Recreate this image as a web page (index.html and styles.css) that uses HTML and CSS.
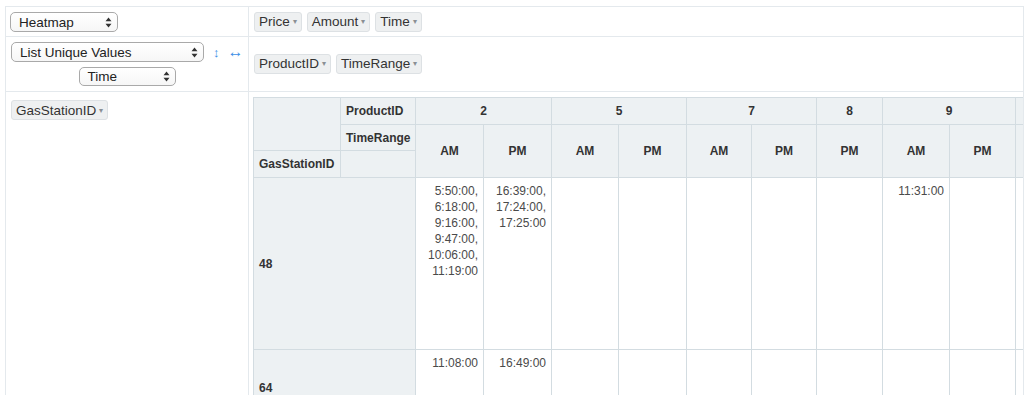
FILE: index.html
```html
<!DOCTYPE html>
<html lang="en">
<head>
  <meta charset="UTF-8">
  <title>Pivot Table</title>
  <link rel="stylesheet" href="styles.css">
</head>
<body>
  <div class="pvt-ui">
    <!-- row 1: renderer + unused attributes -->
    <div class="cell cell-left">
      <div class="dropdown dd-renderer">
        <span>Heatmap</span>
        <svg class="updown" width="7" height="11" viewBox="0 0 7 11"><path d="M3.5 0.5 L6.5 4.2 H0.5 Z M3.5 10.5 L6.5 6.8 H0.5 Z" fill="#333"/></svg>
      </div>
    </div>
    <div class="cell cell-right pills">
      <span class="pill">Price <i class="caret">▾</i></span>
      <span class="pill">Amount <i class="caret">▾</i></span>
      <span class="pill">Time <i class="caret">▾</i></span>
    </div>

    <!-- row 2: aggregator + column attributes -->
    <div class="cell cell-left aggr">
      <div class="aggr-line">
        <div class="dropdown dd-aggr">
          <span>List Unique Values</span>
          <svg class="updown" width="7" height="11" viewBox="0 0 7 11"><path d="M3.5 0.5 L6.5 4.2 H0.5 Z M3.5 10.5 L6.5 6.8 H0.5 Z" fill="#333"/></svg>
        </div>
        <span class="sorter">↕</span>
        <span class="sorter wide">↔</span>
      </div>
      <div class="dropdown dd-val">
        <span>Time</span>
        <svg class="updown" width="7" height="11" viewBox="0 0 7 11"><path d="M3.5 0.5 L6.5 4.2 H0.5 Z M3.5 10.5 L6.5 6.8 H0.5 Z" fill="#333"/></svg>
      </div>
    </div>
    <div class="cell cell-right pills cols">
      <span class="pill">ProductID <i class="caret">▾</i></span>
      <span class="pill">TimeRange <i class="caret">▾</i></span>
    </div>

    <!-- row 3: row attributes + output -->
    <div class="cell cell-left rows">
      <span class="pill">GasStationID <i class="caret">▾</i></span>
    </div>
    <div class="cell cell-right output">
      <table class="pvt-table">
        <colgroup>
          <col style="width:87px"><col style="width:75px">
          <col style="width:68px"><col style="width:68px">
          <col style="width:67px"><col style="width:68px">
          <col style="width:65px"><col style="width:65px">
          <col style="width:66px">
          <col style="width:67px"><col style="width:66px">
          <col style="width:67px"><col style="width:67px">
        </colgroup>
        <thead>
          <tr class="h1">
            <th rowspan="2"></th>
            <th class="axis">ProductID</th>
            <th colspan="2">2</th>
            <th colspan="2">5</th>
            <th colspan="2">7</th>
            <th>8</th>
            <th colspan="2">9</th>
            <th colspan="2">10</th>
          </tr>
          <tr class="h2">
            <th class="axis">TimeRange</th>
            <th rowspan="2">AM</th><th rowspan="2">PM</th>
            <th rowspan="2">AM</th><th rowspan="2">PM</th>
            <th rowspan="2">AM</th><th rowspan="2">PM</th>
            <th rowspan="2">PM</th>
            <th rowspan="2">AM</th><th rowspan="2">PM</th>
            <th rowspan="2">AM</th><th rowspan="2">PM</th>
          </tr>
          <tr class="h3">
            <th class="axis">GasStationID</th>
            <th></th>
          </tr>
        </thead>
        <tbody>
          <tr class="r48">
            <th colspan="2" class="row-label">48</th>
            <td>5:50:00, 6:18:00, 9:16:00, 9:47:00, 10:06:00, 11:19:00</td>
            <td>16:39:00, 17:24:00, 17:25:00</td>
            <td></td><td></td>
            <td></td><td></td>
            <td></td>
            <td>11:31:00</td><td></td>
            <td></td><td></td>
          </tr>
          <tr class="r64">
            <th colspan="2" class="row-label">64</th>
            <td>11:08:00</td>
            <td>16:49:00</td>
            <td></td><td></td>
            <td></td><td></td>
            <td></td>
            <td></td><td></td>
            <td></td><td></td>
          </tr>
        </tbody>
      </table>
    </div>
  </div>
</body>
</html>
```

FILE: styles.css
```css
body {
  margin: 0;
  font-family: "Liberation Sans", Arial, sans-serif;
  color: #333;
  background: #fff;
  overflow: hidden;
}

.pvt-ui {
  display: grid;
  grid-template-columns: 243px 1fr;
  grid-template-rows: 30px 55px auto;
  margin: 6px 0 0 5px;
  border-top: 1px solid #e4e9ed;
  border-left: 1px solid #e4e9ed;
}

.cell {
  box-sizing: border-box;
  border-right: 1px solid #e4e9ed;
  border-bottom: 1px solid #e4e9ed;
  padding: 5px 4px;
  min-width: 0;
}

.cell-right {
  overflow: hidden;
}

/* fake native selects */
.dropdown {
  box-sizing: border-box;
  height: 20px;
  display: flex;
  align-items: center;
  justify-content: space-between;
  padding: 0 5px 0 8px;
  border: 1px solid #a9a9a9;
  border-radius: 5px;
  background: linear-gradient(#ffffff, #f6f6f6);
  font-size: 13.5px;
  color: #222;
}

.dd-renderer {
  width: 108px;
}

.aggr {
  display: flex;
  flex-direction: column;
  align-items: center;
  gap: 5px;
}

.aggr-line {
  align-self: stretch;
  display: flex;
  align-items: center;
  padding-left: 1px;
}

.dd-aggr {
  width: 193px;
}

.sorter {
  color: #3d8fe6;
  font-size: 13px;
  margin-left: 9px;
}

.sorter.wide {
  font-size: 16px;
  margin-left: 8px;
}

.dd-val {
  width: 97px;
}

/* attribute pills */
.pills {
  display: flex;
  align-items: center;
  gap: 5px;
  padding-left: 5px;
}

.cols {
  padding-top: 4px;
  padding-bottom: 5px;
}

.pill {
  box-sizing: border-box;
  display: inline-flex;
  align-items: center;
  height: 20px;
  padding: 0 4px;
  background: #eef0f1;
  border: 1px solid #dde1e4;
  border-radius: 3px;
  font-size: 13.5px;
  color: #333;
  white-space: nowrap;
}

.caret {
  font-style: normal;
  font-size: 8px;
  color: #8a8f94;
  margin-left: 3px;
}

.rows {
  padding: 8px 5px;
}

.output {
  padding: 5px 0 0 4px;
}

/* pivot table */
.pvt-table {
  border-collapse: collapse;
  table-layout: fixed;
  width: 836px;
  font-size: 12px;
}

.pvt-table th {
  background: #edf1f3;
  border: 1px solid #d3dce1;
  padding: 0 5px;
  font-weight: bold;
  color: #333;
  text-align: center;
  vertical-align: middle;
}

.pvt-table th.axis {
  text-align: left;
}

.pvt-table .h1 th {
  height: 26px;
}

.pvt-table .h2 th.axis {
  height: 25px;
}

.pvt-table .h3 th {
  height: 26px;
}

.pvt-table td {
  border: 1px solid #d3dce1;
  padding: 5px;
  color: #4a4a4a;
  text-align: right;
  vertical-align: top;
  line-height: 16px;
}

.pvt-table th.row-label {
  text-align: left;
}

.r48 td,
.r48 th {
  height: 161px;
}

.r64 td,
.r64 th {
  height: 66px;
}
```
